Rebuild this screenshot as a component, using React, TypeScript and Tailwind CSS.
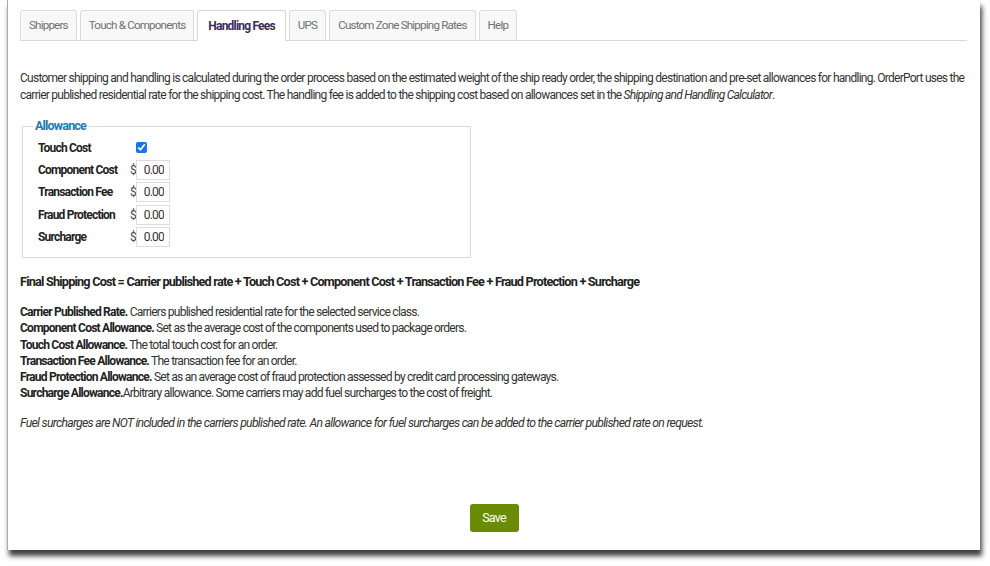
import { useState } from "react";

const tabs = ["Shippers", "Touch & Components", "Handling Fees", "UPS", "Custom Zone Shipping Rates", "Help"];

const rows = [
  { label: "Component Cost", value: "0.00" },
  { label: "Transaction Fee", value: "0.00" },
  { label: "Fraud Protection", value: "0.00" },
  { label: "Surcharge", value: "0.00" },
];

export default function App() {
  const [touch, setTouch] = useState(true);

  return (
    <div className="w-[990px] h-[566px] bg-white font-['Roboto',sans-serif] tracking-[-0.05em] text-[#333]">
      <div className="ml-[7px] w-[973px] h-[550px] bg-white border-l border-[#aaa] shadow-[2px_6px_5px_rgba(0,0,0,0.75)] flex flex-col px-[12px] pt-[10px]">
        {/* Tabs */}
        <div className="flex items-end gap-[3px] border-b border-[#d6d6d6] mr-[1px]">
          {tabs.map((t) =>
            t === "Handling Fees" ? (
              <div
                key={t}
                className="h-[31px] -mb-px px-[10px] flex items-center bg-white border border-b-white border-[#d6d6d6] rounded-t-[3px] text-[12px] font-bold text-[#3b2d58]"
              >
                {t}
              </div>
            ) : (
              <div
                key={t}
                className="h-[30px] px-[8px] flex items-center bg-[#f8f8f9] border border-b-0 border-[#dcdcdc] rounded-t-[3px] text-[11.6px] text-[#707070]"
              >
                {t}
              </div>
            )
          )}
        </div>

        <p className="mt-[29px] text-[12px] leading-[17px] tracking-[-0.062em]">
          Customer shipping and handling is calculated during the order process based on the estimated weight of the ship ready order, the shipping destination and pre-set allowances for handling. OrderPort uses the carrier published residential rate for the shipping cost. The handling fee is added to the shipping cost based on allowances set in the <i>Shipping and Handling Calculator</i>.
        </p>

        <fieldset className="mt-[13px] ml-[2px] w-[449px] border border-[#d9d9d9] pl-[15px] pr-[10px] pt-[2px] pb-[10px]">
          <legend className="px-[2px] -ml-[5px] text-[12.5px] font-bold text-[#1b7bb2]">Allowance</legend>
          <div className="flex flex-col gap-[2.3px] text-[12px] font-bold text-[#222]">
            <div className="flex items-center h-[20px]">
              <span className="w-[98px]">Touch Cost</span>
              <input
                type="checkbox"
                checked={touch}
                onChange={() => setTouch(!touch)}
                className="w-[11px] h-[11px] accent-[#1a73e8]"
              />
            </div>
            {rows.map((r) => (
              <div key={r.label} className="flex items-center h-[20px]">
                <span className="w-[92px]">{r.label}</span>
                <span className="w-[6px] font-normal text-[#444]">$</span>
                <input
                  readOnly
                  value={r.value}
                  className="w-[34px] h-[20px] border border-[#ddd] text-right pr-[5px] font-normal text-[12px] text-[#333]"
                />
              </div>
            ))}
          </div>
        </fieldset>

        <p className="mt-[14px] text-[12.7px] font-bold text-[#222]">
          Final Shipping Cost = Carrier published rate + Touch Cost + Component Cost + Transaction Fee + Fraud Protection + Surcharge
        </p>

        <div className="mt-[13px] text-[12.1px] leading-[16.3px]">
          <div><b className="text-[#222]">Carrier Published Rate.</b> Carriers published residential rate for the selected service class.</div>
          <div><b className="text-[#222]">Component Cost Allowance.</b> Set as the average cost of the components used to package orders.</div>
          <div><b className="text-[#222]">Touch Cost Allowance.</b> The total touch cost for an order.</div>
          <div><b className="text-[#222]">Transaction Fee Allowance.</b> The transaction fee for an order.</div>
          <div><b className="text-[#222]">Fraud Protection Allowance.</b> Set as an average cost of fraud protection assessed by credit card processing gateways.</div>
          <div><b className="text-[#222]">Surcharge Allowance.</b>Arbitrary allowance. Some carriers may add fuel surcharges to the cost of freight.</div>
        </div>

        <p className="mt-[12px] text-[12.2px] italic tracking-[-0.058em]">
          Fuel surcharges are NOT included in the carriers published rate. An allowance for fuel surcharges can be added to the carrier published rate on request.
        </p>

        <div className="mt-[72px] flex justify-center">
          <button className="w-[49px] h-[28px] rounded-[3px] bg-[#6a8b05] text-white text-[12.5px]">Save</button>
        </div>
      </div>
    </div>
  );
}
